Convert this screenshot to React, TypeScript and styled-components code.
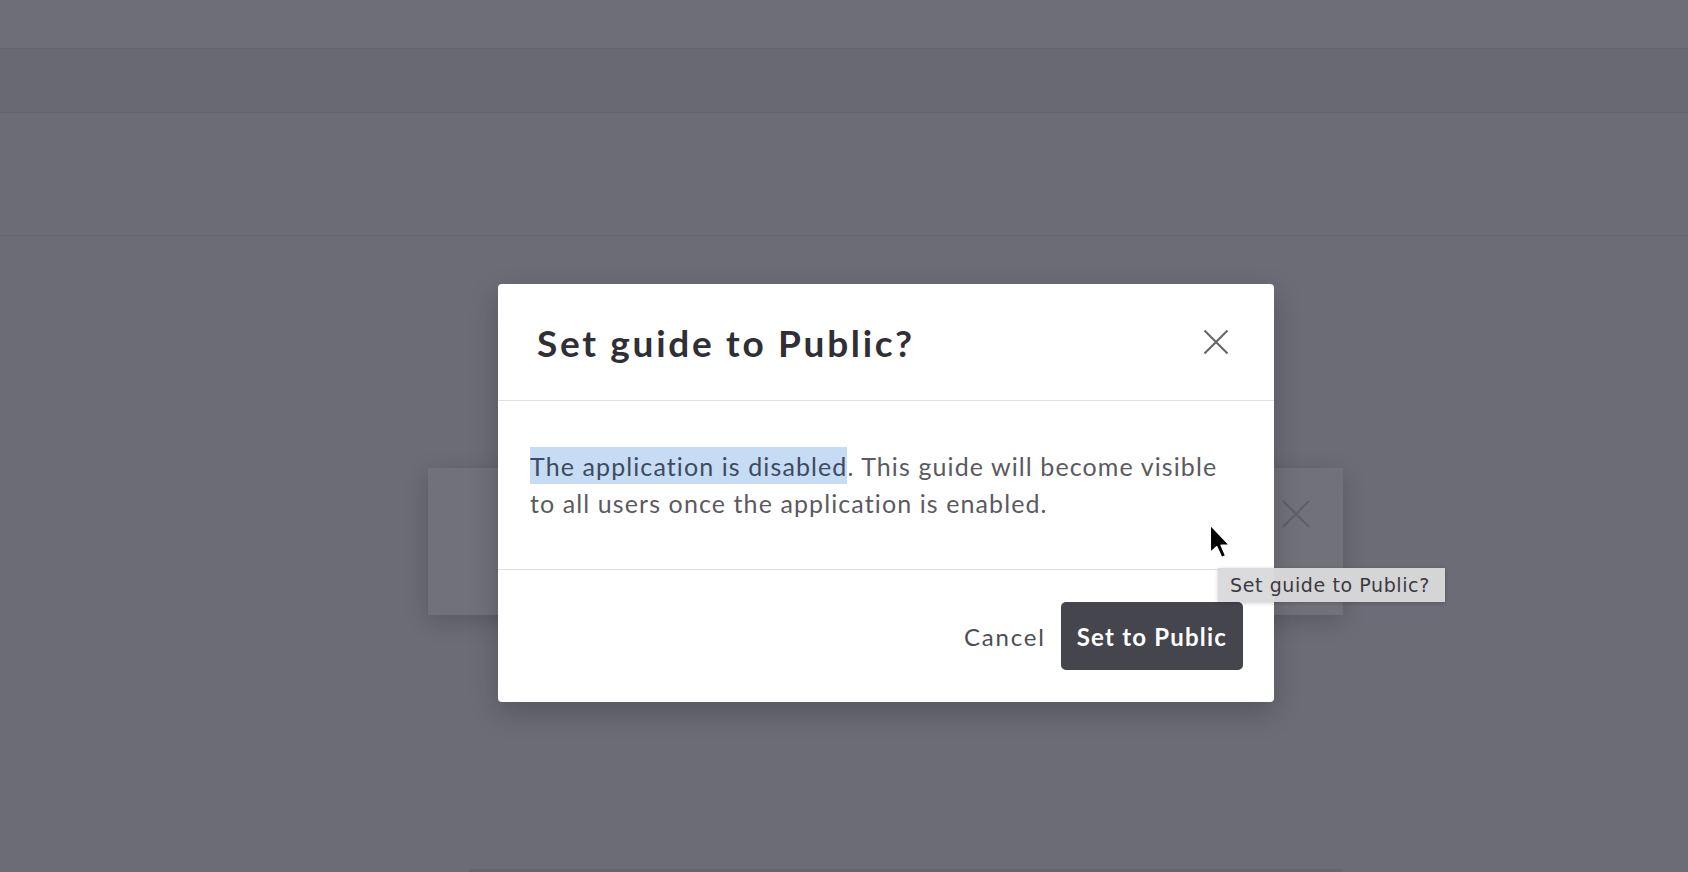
import React from 'react';
import styled, { createGlobalStyle } from 'styled-components';

const GlobalStyle = createGlobalStyle`
  html, body {
    margin: 0;
    padding: 0;
    background: #6c6c76;
    font-family: Lato, "Open Sans", sans-serif;
  }
`

const Styled_page = styled.div`
  position: relative;
  width: 100%;
  height: 872px;
  overflow: hidden;
  background: #6c6c76;
  display: flex;
  flex-direction: column;
`

const Styled_band = styled.div<{ $h: number; $bg: string }>`
  height: ${p => p.$h}px;
  flex-shrink: 0;
  background: ${p => p.$bg};
  border-bottom: 1px solid #65656d;
`

const Styled_bottom_strip = styled.div`
  margin-top: auto;
  margin-left: 469px;
  width: 874px;
  height: 3px;
  background: #65656d;
`

const Styled_back_panel = styled.div`
  position: absolute;
  left: 428px;
  top: 468px;
  width: 915px;
  height: 147px;
  background: #717179;
  box-shadow: 0 6px 22px rgba(0, 0, 0, 0.18);
  display: flex;
  justify-content: flex-end;
  padding: 31px 32px 0 0;
  box-sizing: border-box;
`

const Styled_modal = styled.div`
  position: absolute;
  left: 498px;
  top: 284px;
  width: 776px;
  background: #ffffff;
  border-radius: 4px;
  box-shadow: 0 10px 28px rgba(0, 0, 0, 0.22);
  display: flex;
  flex-direction: column;
`

const Styled_modal_header = styled.div`
  height: 116px;
  padding: 0 45px 0 39px;
  display: flex;
  align-items: center;
  justify-content: space-between;
  border-bottom: 1px solid #e1e1e3;

  h2 {
    margin: 0;
    font-size: 37px;
    font-weight: 700;
    color: #2f2f35;
    letter-spacing: 2.7px;
  }
`

const Styled_close = styled.button`
  border: none;
  background: none;
  padding: 0;
  width: 26px;
  height: 26px;
  cursor: pointer;
  display: flex;
`

const Styled_modal_body = styled.div`
  padding: 47px 32px 47px 32px;
  border-bottom: 1px solid #e1e1e3;

  p {
    margin: 0;
    font-size: 25px;
    line-height: 37px;
    letter-spacing: 1.1px;
    color: #5a5a5f;
  }
`

const Styled_selected = styled.span`
  background: #c6dbf4;
  color: #3e4b5e;
  padding: 4px 0 3px;
`

const Styled_modal_footer = styled.div`
  padding: 32px 31px;
  display: flex;
  justify-content: flex-end;
  align-items: center;
  gap: 1px;
`

const Styled_button = styled.button<{ $primary?: boolean }>`
  height: 68px;
  border: none;
  border-radius: 5px;
  padding: 0 ${p => (p.$primary ? 16 : 14)}px;
  font-family: Lato, sans-serif;
  font-size: 24px;
  font-weight: ${p => (p.$primary ? 700 : 400)};
  letter-spacing: ${p => (p.$primary ? 1.2 : 1.8)}px;
  color: ${p => (p.$primary ? '#ffffff' : '#4e4e54')};
  background: ${p => (p.$primary ? '#45454d' : 'transparent')};
  cursor: pointer;
`

const Styled_tooltip = styled.div`
  position: absolute;
  left: 1218px;
  top: 568px;
  height: 34px;
  padding: 0 15px 0 12px;
  display: flex;
  align-items: center;
  background: rgba(218, 218, 220, 0.96);
  box-shadow: 0 1px 4px rgba(0, 0, 0, 0.2);
  font-family: "DejaVu Sans", Verdana, sans-serif;
  font-size: 19px;
  letter-spacing: 0.6px;
  color: #3a3a3e;
`

const Styled_cursor = styled.svg`
  position: absolute;
  left: 1208px;
  top: 522px;
`

function App() {
  return (
    <>
      <GlobalStyle />
      <Styled_page>
        <Styled_band $h={48} $bg="#6e6e78" />
        <Styled_band $h={63} $bg="#696972" />
        <Styled_band $h={122} $bg="#6c6c76" />
        <Styled_bottom_strip />

        <Styled_back_panel>
          <svg width="30" height="30" viewBox="0 0 30 30">
            <path d="M2 2 L28 28 M28 2 L2 28" stroke="#5f5f67" strokeWidth="2" />
          </svg>
        </Styled_back_panel>

        <Styled_modal>
          <Styled_modal_header>
            <h2>Set guide to Public?</h2>
            <Styled_close aria-label="Close">
              <svg width="26" height="26" viewBox="0 0 26 26">
                <path d="M1.5 1.5 L24.5 24.5 M24.5 1.5 L1.5 24.5" stroke="#68686d" strokeWidth="2.2" />
              </svg>
            </Styled_close>
          </Styled_modal_header>
          <Styled_modal_body>
            <p>
              <Styled_selected>The application is disabled</Styled_selected>. This guide will become visible
              to all users once the application is enabled.
            </p>
          </Styled_modal_body>
          <Styled_modal_footer>
            <Styled_button>Cancel</Styled_button>
            <Styled_button $primary>Set to Public</Styled_button>
          </Styled_modal_footer>
        </Styled_modal>

        <Styled_tooltip>Set guide to Public?</Styled_tooltip>

        <Styled_cursor width="26" height="40" viewBox="0 0 24 36">
          <path
            d="M2 2 L2 28 L8 22.5 L12.5 32.5 L16.5 30.8 L12.2 21 L20 21 Z"
            fill="#000"
            stroke="#fff"
            strokeWidth="1.6"
            strokeLinejoin="round"
          />
        </Styled_cursor>
      </Styled_page>
    </>
  );
}

export default App;
